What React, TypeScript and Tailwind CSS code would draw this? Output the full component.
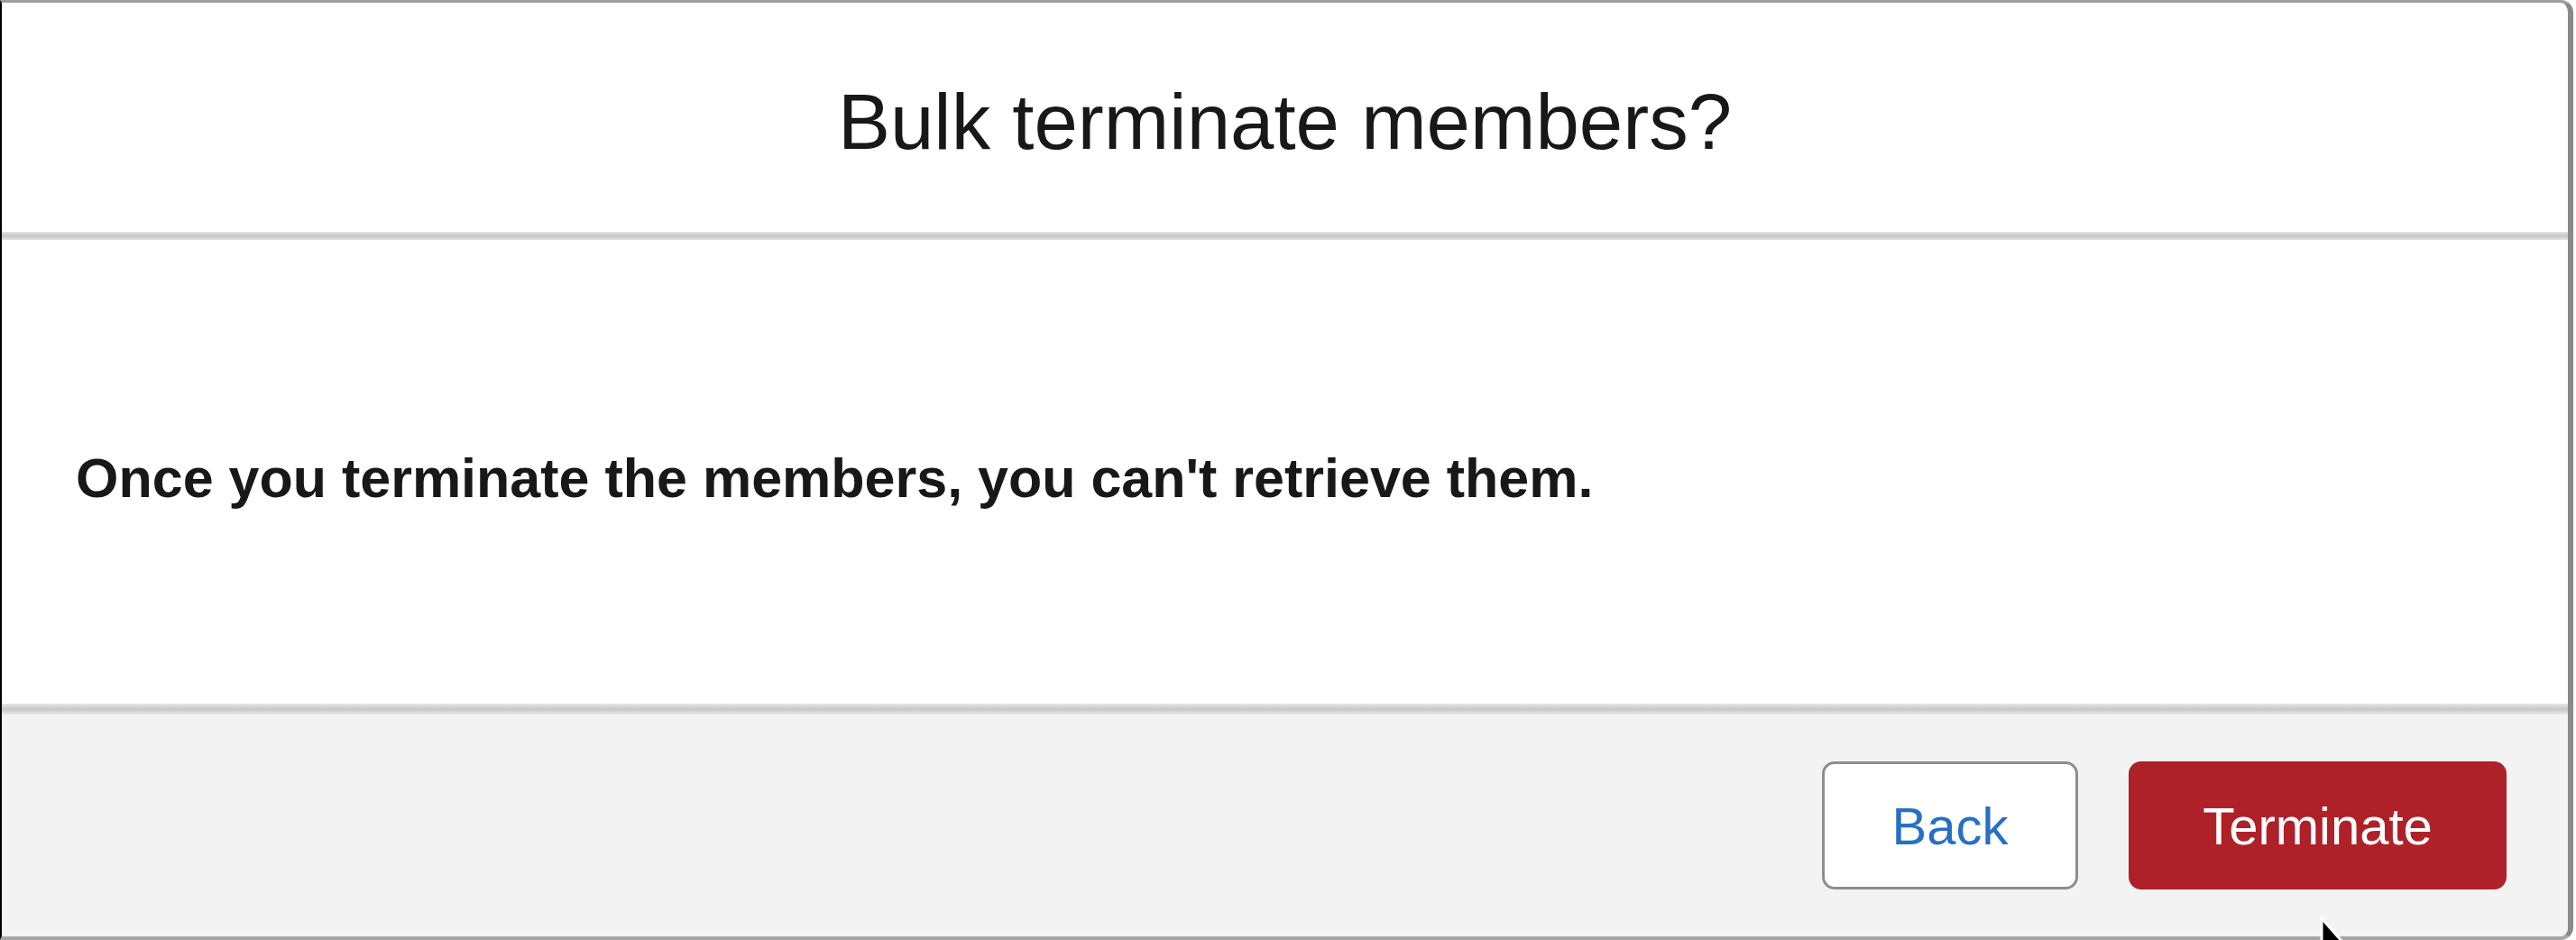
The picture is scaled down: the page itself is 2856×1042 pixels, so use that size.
import React from "react";

export default function App() {
  return (
    <div className="relative w-[2856px] h-[1042px] bg-white overflow-hidden pr-[3px] flex" style={{ fontFamily: '"Liberation Sans", Arial, sans-serif' }}>
      <div className="flex-1 flex flex-col bg-white border-l-2 border-l-black border-t-[3px] border-t-[#9e9e9e] border-r-[6px] border-r-[#8a8a8a] border-b-[4px] border-b-[#a6a6a6] rounded-r-[14px] overflow-hidden">
        <div className="h-[254px] flex items-center justify-center pt-[8px]">
          <h2 className="text-[87px] leading-none text-[#181818] font-normal">Bulk terminate members?</h2>
        </div>
        <div className="h-[9px] bg-linear-to-b from-[#e4e4e4] via-[#c6c6c6] to-[#e4e4e4]" />
        <div className="h-[514px] flex items-center px-[82px] pt-[14px]">
          <p className="text-[61px] leading-none font-bold text-[#181818]">Once you terminate the members, you can&apos;t retrieve them.</p>
        </div>
        <div className="h-[12px] bg-linear-to-b from-[#e6e6e6] via-[#c8c8c8] to-[#e6e6e6]" />
        <div className="h-[246px] bg-[#f3f3f3] flex items-center justify-end gap-[56px] pr-[68px]">
          <button className="w-[284px] h-[142px] bg-white border-[3px] border-[#8e8e8e] rounded-[14px] text-[58px] text-[#2670c4] flex items-center justify-center">Back</button>
          <button className="w-[419px] h-[142px] bg-[#af2128] rounded-[14px] text-[58px] text-white flex items-center justify-center">Terminate</button>
        </div>
      </div>
      <svg className="absolute left-[2570px] top-[1016px]" width="40" height="60" viewBox="0 0 20 30">
        <path d="M2 1 L2 24 L7 19 L11 28 L14 27 L10 18 L17 18 Z" fill="#000" stroke="#fff" strokeWidth="1.5" />
      </svg>
    </div>
  );
}
